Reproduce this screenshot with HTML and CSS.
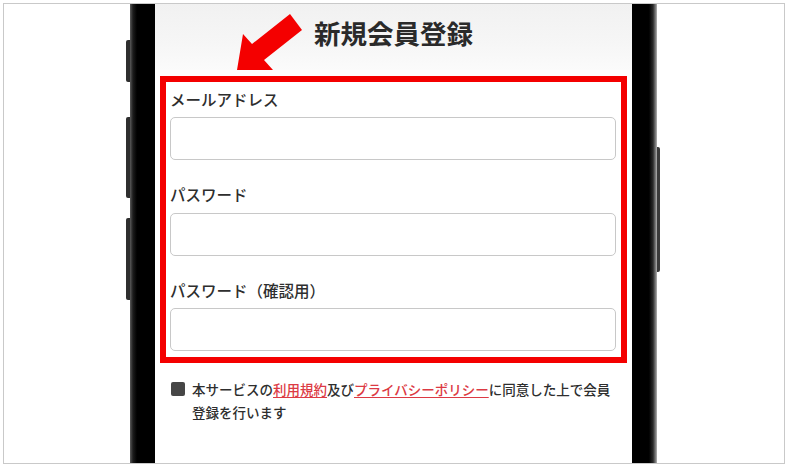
FILE: index.html
```html
<!DOCTYPE html>
<html lang="ja">
<head>
<meta charset="utf-8">
<title>新規会員登録</title>
<link rel="stylesheet" href="styles.css">
</head>
<body>
<div class="frame">
  <div class="device">
    <div class="side side-left">
      <span class="key key-1"></span>
      <span class="key key-2"></span>
      <span class="key key-3"></span>
    </div>
    <div class="bezel bezel-left"></div>
    <div class="screen">
      <header class="top">
        <h1 class="title">新規会員登録</h1>
      </header>
      <svg class="arrow" width="70" height="62" viewBox="0 0 70 62" aria-hidden="true">
        <polygon points="2,58 8,22 17,32 55,2 67,18 29,48 38,58" fill="#f40000"/>
      </svg>
      <form class="box">
        <div class="field">
          <label class="label" for="email">メールアドレス</label>
          <input class="input" id="email" type="text">
        </div>
        <div class="field">
          <label class="label" for="pw">パスワード</label>
          <input class="input" id="pw" type="text">
        </div>
        <div class="field">
          <label class="label" for="pw2">パスワード（確認用）</label>
          <input class="input" id="pw2" type="text">
        </div>
      </form>
      <div class="agree">
        <span class="check"></span>
        <p class="agree-text">本サービスの<a class="link" href="#">利用規約</a>及び<a class="link" href="#">プライバシーポリシー</a>に同意した上で会員登録を行います</p>
      </div>
    </div>
    <div class="bezel bezel-right"></div>
    <div class="side side-right">
      <span class="key key-4"></span>
    </div>
  </div>
</div>
</body>
</html>
```

FILE: styles.css
```css
* { box-sizing: border-box; }

html, body {
  margin: 0;
  padding: 0;
  background: #ffffff;
}

body {
  font-family: "Noto Sans CJK JP", "Noto Sans", sans-serif;
  color: #333333;
}

.frame {
  margin: 3px;
  width: 782px;
  height: 461px;
  border: 1px solid #c9c9c9;
  overflow: hidden;
  padding-left: 122px;
}

.device {
  display: flex;
  height: 100%;
}

.side {
  display: flex;
  flex-direction: column;
}

.side-left { width: 4px; }
.side-right { width: 3px; }

.key {
  display: block;
  background: #2e2e2e;
}

.side-left .key { border-radius: 2px 0 0 2px; }
.side-right .key { border-radius: 0 2px 2px 0; background: #3a3a3a; }

.key-1 { margin-top: 36px; height: 42px; }
.key-2 { margin-top: 35px; height: 81px; }
.key-3 { margin-top: 20px; height: 82px; }
.key-4 { margin-top: 143px; height: 125px; }

.bezel {
  width: 25px;
  height: 100%;
}

.bezel-left {
  background: linear-gradient(to right, #5a5a5a 0, #1c1c1c 3px, #000 7px, #000 100%);
}

.bezel-right {
  background: linear-gradient(to right, #000 0, #000 17px, #2a2a2a 21px, #8a8a8a 24px, #b5b5b5 25px);
}

.screen {
  position: relative;
  width: 477px;
  height: 100%;
  background: #ffffff;
}

.top {
  height: 66px;
  padding-top: 11px;
  background: linear-gradient(to bottom, #f1f1f1 0, #f6f6f6 60%, #fbfbfb 100%);
}

.title {
  margin: 0;
  font-size: 26.5px;
  line-height: 36px;
  font-weight: 700;
  text-align: center;
  color: #2a2a2a;
}

.arrow {
  position: absolute;
  left: 80px;
  top: 8px;
}

.box {
  margin: 6px 0 0 5px;
  width: 467px;
  border: 6px solid #f40000;
  padding: 5.5px 5px 6px 4px;
  background: #ffffff;
}

.field + .field { margin-top: 23px; }

.label {
  display: block;
  font-size: 15.5px;
  line-height: 22px;
  font-weight: 500;
  margin-bottom: 7.5px;
  color: #2e2e2e;
}

.input {
  display: block;
  width: 100%;
  height: 43px;
  margin: 0;
  border: 1px solid #c8c8c8;
  border-radius: 5px;
  background: #fff;
  font: inherit;
}

.agree {
  display: flex;
  align-items: flex-start;
  margin-top: 14.5px;
  padding: 0 15px 0 16px;
}

.check {
  flex: none;
  width: 14px;
  height: 14px;
  margin-top: 4.5px;
  margin-right: 7px;
  border-radius: 2px;
  background: #464646;
}

.agree-text {
  margin: 0;
  font-size: 13.5px;
  line-height: 23px;
  font-weight: 500;
  color: #2e2e2e;
}

.link {
  color: #dc3a44;
  text-decoration: underline;
  text-underline-offset: 2px;
}
```
